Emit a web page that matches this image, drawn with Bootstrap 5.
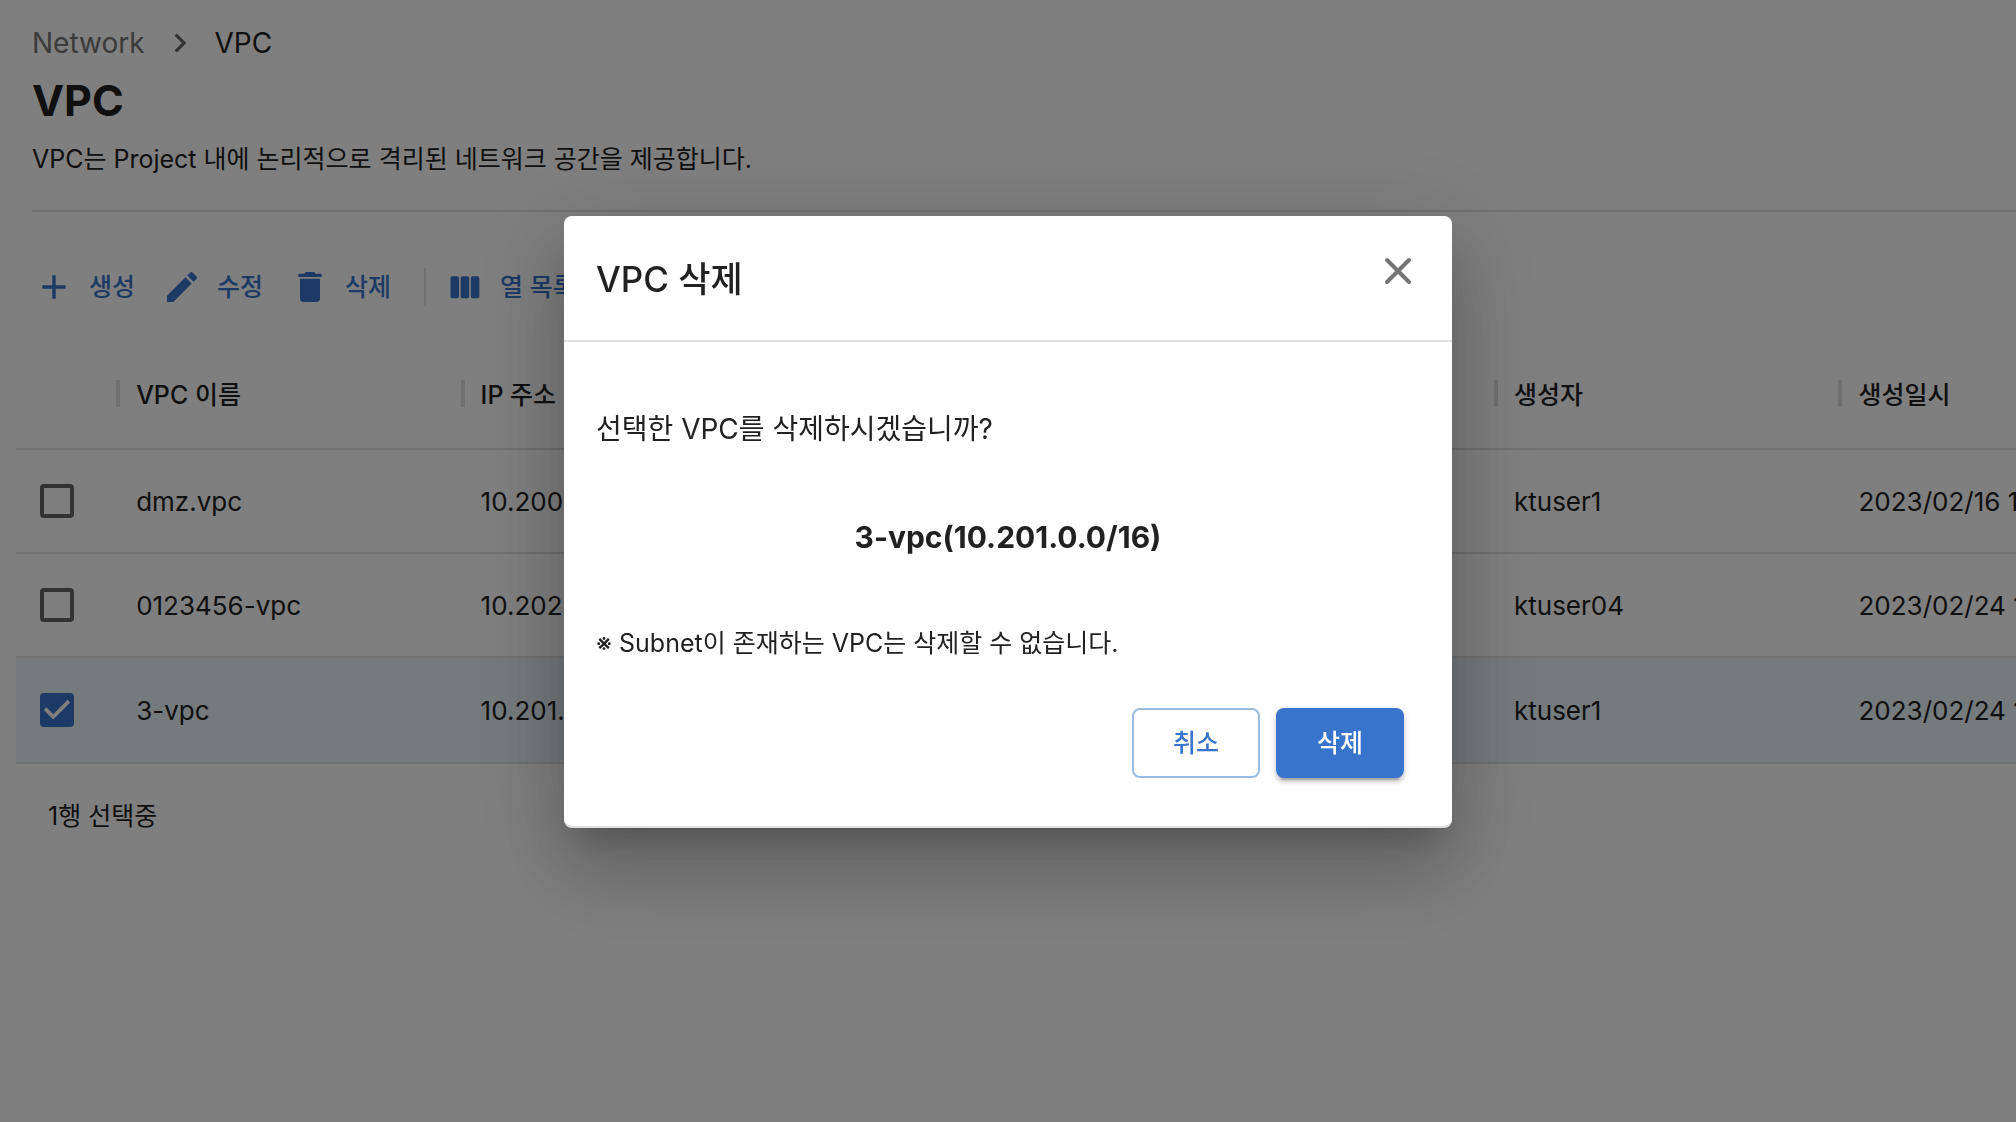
<!DOCTYPE html>
<html lang="ko">
<head>
<meta charset="utf-8">
<meta name="viewport" content="width=device-width, initial-scale=1">
<title>VPC</title>
<link href="https://cdn.jsdelivr.net/npm/bootstrap@5.3.0/dist/css/bootstrap.min.css" rel="stylesheet">
<style>
  :root { --brand: #3874cb; --ink: #212121; --rule: #e0e0e0; --muted: #757575; }
  body { font-family: Inter, "Noto Sans CJK KR", sans-serif; font-size: 25px; line-height: 40px; color: var(--ink); background: #fff; }
  svg { display: block; fill: currentColor; flex: none; }

  .page-head { margin-left: 32px; padding: 23px 0 31px; border-bottom: 2px solid var(--rule); }
  .crumbs { font-size: 28px; gap: 16px; }
  .crumbs a { color: var(--muted); }
  .page-title { font-size: 43px; line-height: 56px; font-weight: 700; margin: 9px 0 11px; }

  .toolbar { padding: 51px 0 0 34px; height: 132px; }
  .tool { border: 0; background: none; padding: 0; color: var(--brand); font-size: 25px; line-height: 48px; font-weight: 500; gap: 15px; white-space: nowrap; margin-right: 27px; }
  .tool-rule { width: 2px; height: 38px; background: var(--rule); margin: 0 19px 0 6px; }

  .grid-wrap { margin-left: 16px; overflow: hidden; }
  .vpc-grid { table-layout: fixed; width: 2167px; margin: 0; border-collapse: separate; border-spacing: 0; }
  .vpc-grid th, .vpc-grid td { border-bottom: 2px solid var(--rule); padding: 1px 20px 0; height: 104px; vertical-align: middle; white-space: nowrap; text-align: left; font-size: 26px; }
  .vpc-grid th { font-size: 25px; font-weight: 500; height: 106px; padding: 0 20px 2px; }
  .vpc-grid .pick { width: 100px; padding: 0 0 0 24px; }
  .vpc-grid .data { width: 344px; }
  .vpc-grid th.data { background: linear-gradient(var(--rule), var(--rule)) 0 36px / 4px 27px no-repeat; }
  .vpc-grid .picked td { background: #ebf4fa; height: 106px; }
  .tick { appearance: none; display: block; width: 34px; height: 34px; margin: 0; border: 4px solid #666; border-radius: 4px; background: #fff; }
  .tick:checked { border-color: var(--brand); background: var(--brand) url("data:image/svg+xml,%3Csvg xmlns='http://www.w3.org/2000/svg' viewBox='0 0 18 18'%3E%3Cpath d='M7 14 2 9l1.4-1.4L7 11.2l7.6-7.6L16 5z' fill='%23fff'/%3E%3C/svg%3E") center / 34px 34px no-repeat; }
  .picked-count { padding: 32px 48px; }

  .modal-dialog { max-width: 888px; margin-top: 216px; }
  .modal-content { border: 0; border-bottom: 2px solid var(--rule); border-radius: 8px; color: var(--ink);
    box-shadow: 0 22px 30px -14px rgba(0,0,0,.2), 0 48px 76px 6px rgba(0,0,0,.14), 0 18px 92px 16px rgba(0,0,0,.12); }
  .modal-header { padding: 33px 32px 35px; border-bottom: 2px solid var(--rule); }
  .modal-title { font-size: 35px; line-height: 52px; font-weight: 500; }
  .x-close { border: 0; background: none; padding: 0; color: var(--muted); margin: 0 0 12px; }
  .modal-body { padding: 67px 32px 45px; font-size: 28px; }
  .target { font-size: 30px; font-weight: 700; margin: 68px 0 66px; }
  .note { font-size: 25px; }
  .modal-footer { border: 0; padding: 0 48px 48px; gap: 16px; }
  .modal-footer .btn { margin: 0; width: 128px; height: 70px; border-radius: 8px; font-size: 25px; line-height: 40px; font-weight: 500; padding: 0; }
  .btn-cancel { border: 2px solid #9bb9e5; color: var(--brand); background: #fff; }
  .btn-delete { background: var(--brand); color: #fff; box-shadow: 0 6px 2px -4px rgba(0,0,0,.2), 0 4px 4px rgba(0,0,0,.14), 0 2px 10px rgba(0,0,0,.12); }
</style>
</head>
<body>
<main>
  <header class="page-head">
    <nav class="crumbs d-flex align-items-center" aria-label="breadcrumb">
      <a href="#" class="text-decoration-none">Network</a>
      <svg width="38" height="38" viewBox="0 0 24 24" stroke="#666" aria-hidden="true"><path d="m9.300 6.700 5.300 5.300-5.300 5.300" fill="none" stroke-width="2"/></svg>
      <span aria-current="page">VPC</span>
    </nav>
    <h1 class="page-title">VPC</h1>
    <p class="m-0">VPC는 Project 내에 논리적으로 격리된 네트워크 공간을 제공합니다.</p>
  </header>

  <div class="toolbar d-flex align-items-start">
    <div class="d-flex align-items-center">
      <button type="button" class="tool d-flex align-items-center"><svg width="40" height="40" viewBox="0 0 24 24"><path d="M19 13h-6v6h-2v-6H5v-2h6V5h2v6h6z"/></svg>생성</button>
      <button type="button" class="tool d-flex align-items-center"><svg width="40" height="40" viewBox="0 0 24 24"><path d="M3 17.250V21h3.750L17.810 9.940l-3.750-3.750zM20.710 7.040c.39-.39.39-1.020 0-1.410l-2.340-2.340a.996.996 0 0 0-1.410 0l-1.830 1.830 3.750 3.750z"/></svg>수정</button>
      <button type="button" class="tool d-flex align-items-center"><svg width="40" height="40" viewBox="0 0 24 24"><path d="M6 19c0 1.100.9 2 2 2h8c1.100 0 2-.9 2-2V7H6zM19 4h-3.500l-1-1h-5l-1 1H5v2h14z"/></svg>삭제</button>
      <span class="tool-rule"></span>
      <button type="button" class="tool d-flex align-items-center"><svg width="40" height="40" viewBox="0 0 24 24"><rect x="3.300" y="5.500" width="5.100" height="13.200" rx="1"/><rect x="9.400" y="5.500" width="5.100" height="13.200" rx="1"/><rect x="15.500" y="5.500" width="5.100" height="13.200" rx="1"/></svg>열 목록</button>
    </div>
  </div>

  <div class="grid-wrap">
    <table class="vpc-grid">
      <thead>
        <tr><th class="pick"></th><th class="data">VPC 이름</th><th class="data">IP 주소</th><th class="data"></th><th class="data"></th><th class="data">생성자</th><th class="data">생성일시</th></tr>
      </thead>
      <tbody>
        <tr><td class="pick"><input type="checkbox" class="tick" aria-label="dmz.vpc"></td><td>dmz.vpc</td><td>10.200.0.0/16</td><td></td><td></td><td>ktuser1</td><td>2023/02/16 10:00:00</td></tr>
        <tr><td class="pick"><input type="checkbox" class="tick" aria-label="0123456-vpc"></td><td>0123456-vpc</td><td>10.202.0.0/16</td><td></td><td></td><td>ktuser04</td><td>2023/02/24 10:00:00</td></tr>
        <tr class="picked"><td class="pick"><input type="checkbox" class="tick" aria-label="3-vpc" checked></td><td>3-vpc</td><td>10.201.0.0/16</td><td></td><td></td><td>ktuser1</td><td>2023/02/24 10:00:00</td></tr>
      </tbody>
    </table>
  </div>
  <div class="picked-count">1행 선택중</div>
</main>

<div class="modal-backdrop show"></div>
<div class="modal show d-block" tabindex="-1" role="dialog" aria-modal="true" aria-labelledby="dlg-title">
  <div class="modal-dialog">
    <div class="modal-content">
      <div class="modal-header d-flex justify-content-between align-items-end">
        <h2 class="modal-title" id="dlg-title">VPC 삭제</h2>
        <button type="button" class="x-close" aria-label="닫기"><svg width="44" height="44" viewBox="0 0 44 44" stroke="currentColor" stroke-width="4" stroke-linecap="round"><path d="m11 11 22 22M33 11 11 33"/></svg></button>
      </div>
      <div class="modal-body">
        <p class="m-0">선택한 VPC를 삭제하시겠습니까?</p>
        <p class="target text-center">3-vpc(10.201.0.0/16)</p>
        <p class="note m-0">※ Subnet이 존재하는 VPC는 삭제할 수 없습니다.</p>
      </div>
      <div class="modal-footer">
        <button type="button" class="btn btn-cancel">취소</button>
        <button type="button" class="btn btn-delete">삭제</button>
      </div>
    </div>
  </div>
</div>
<script src="https://cdn.jsdelivr.net/npm/bootstrap@5.3.0/dist/js/bootstrap.bundle.min.js"></script>
</body>
</html>
